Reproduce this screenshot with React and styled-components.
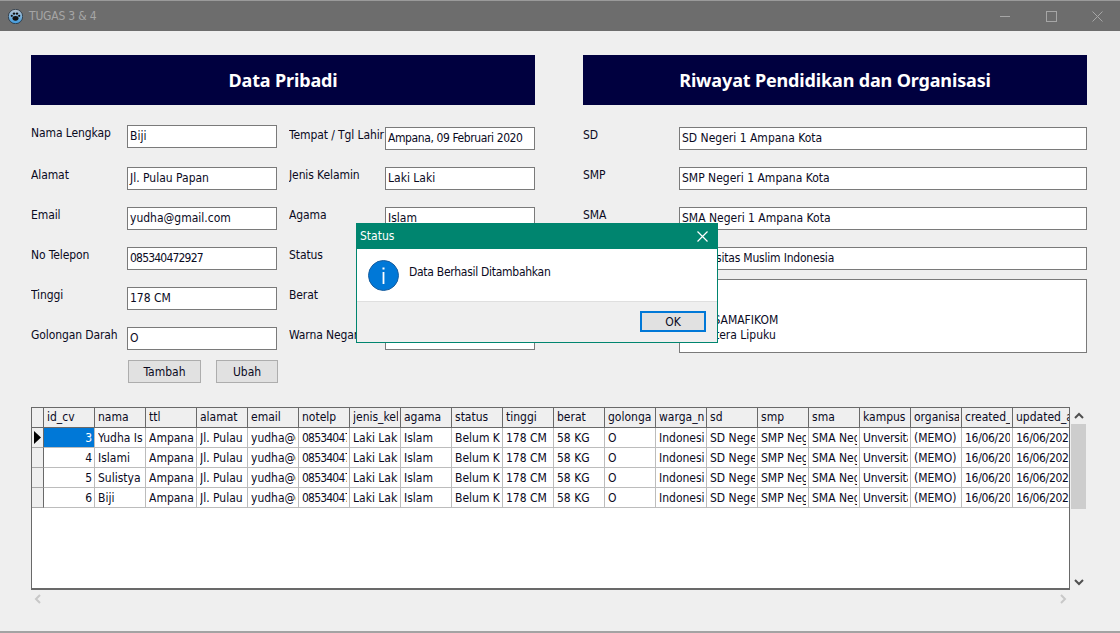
import React from "react";
import styled, { createGlobalStyle } from "styled-components";

const Global = createGlobalStyle`
  html, body { margin: 0; padding: 0; background: #efefef; }
  body { font-family: "DejaVu Sans Condensed", "Noto Sans", sans-serif; font-size: 12px; color: #0a0a1e; }
  * { box-sizing: border-box; }
`;

const Window = styled.div`
  position: relative; width: 1120px; height: 633px; overflow: hidden;
  display: flex; flex-direction: column; background: #efefef;
  border-bottom: 2px solid #a3a3a3;
`;
const TitleBar = styled.div`
  height: 31px; flex: none; background: #6d6d6d; border-top: 1px solid #9a9a9a;
  display: flex; align-items: center; padding-left: 8px; color: #a6a6a6; font-size: 12px;
`;
const TitleText = styled.span` margin-left: 6px; flex: 1; letter-spacing: -0.2px; `;
const WinButton = styled.span`
  width: 46px; height: 30px; display: flex; align-items: center; justify-content: center; flex: none;
`;
const Main = styled.main` flex: 1; padding: 24px 33px 0 31px; display: flex; flex-direction: column; `;
const Panels = styled.div` display: grid; grid-template-columns: 504px 504px; column-gap: 48px; `;
const Panel = styled.section` display: flex; flex-direction: column; `;
const Banner = styled.h1`
  margin: 0; height: 50px; background: #00003f; color: #fff; font-size: 18px; font-weight: 700;
  font-family: "Noto Sans", sans-serif;
  display: flex; align-items: center; justify-content: center; letter-spacing: -0.15px;
`;
const TwoCols = styled.div` display: grid; grid-template-columns: 246px 246px; column-gap: 12px; `;
const FieldCol = styled.div` display: flex; flex-direction: column; padding-top: ${p => p.$top}px; `;
const Field = styled.div`
  display: flex; align-items: flex-start; height: ${p => p.$h || 40}px;
`;
const Label = styled.label`
  width: 96px; flex: none; line-height: 16px; white-space: nowrap; overflow: hidden; letter-spacing: -0.1px;
`;
const Input = styled.div`
  flex: 1; height: 23px; background: #fff; border: 1px solid #7a7a7a; padding: 0 2px;
  line-height: 20px; white-space: nowrap; overflow: hidden; letter-spacing: ${p => p.$ls || 0}px;
`;
const Memo = styled.div`
  flex: 1; height: 74px; background: #fff; border: 1px solid #7a7a7a; padding: 33px 2px 0;
  line-height: 15px; white-space: pre;  overflow: hidden;
`;
const ButtonRow = styled.div` display: flex; gap: 15px; padding-left: 97px; `;
const Push = styled.button`
  width: ${p => p.$w}px; height: 23px; background: #e1e1e1; border: 1px solid #adadad; padding: 0;
  font: inherit; color: inherit;
`;

const GridArea = styled.div` display: flex; gap: 1px; margin-top: 24px; height: 183px; `;
const Table = styled.div`
  width: 1039px; height: 183px; flex: none; background: #fff; border: 2px solid #696969; border-width: 1px 1px 2px 1px;
  display: grid; grid-template-columns: 12px repeat(19, 51px) 1fr; grid-auto-rows: 20px; align-content: start; overflow: hidden;
`;
const Corner = styled.div` background: #efefef; border-right: 1px solid #696969; border-bottom: 1px solid #696969; `;
const Head = styled.div`
  background: #efefef; border-right: 1px solid ${p => p.$last ? "transparent" : "#696969"}; border-bottom: 1px solid #696969;
  padding-left: 3px; line-height: 19px; white-space: nowrap;
`;
const RowHead = styled.div`
  background: #efefef; border-right: 1px solid #696969; border-bottom: 1px solid #a8a8a8;
  display: flex; align-items: center; padding-left: 2px;
`;
const Cell = styled.div`
  border-right: 1px solid ${p => p.$last ? "transparent" : "#bcbcbc"}; border-bottom: 1px solid #bcbcbc;
  padding-left: 3px; line-height: 20px; white-space: nowrap; letter-spacing: ${p => p.$ls || 0}px;
  background: ${p => p.$sel ? "#0078d7" : "#fff"}; color: ${p => p.$sel ? "#fff" : "inherit"};
  text-align: ${p => p.$num ? "right" : "left"}; padding-right: ${p => p.$num ? 2 : 0}px;
`;
const Clip = styled.span` display: block; overflow: hidden; margin-right: 2px; `;
const VScroll = styled.div` width: 15px; display: flex; flex-direction: column; align-items: center; `;
const Arrow = styled.div` height: 17px; flex: none; display: flex; align-items: center; justify-content: center; `;
const Thumb = styled.div` width: 15px; height: 85px; background: #cdcdcd; flex: none; `;
const Spacer = styled.div` flex: 1; `;
const HScroll = styled.div`
  width: 1039px; height: 17px; display: flex; justify-content: space-between; padding: 0 3px;
`;

const Dialog = styled.div`
  position: absolute; left: 356px; top: 223px; width: 362px; height: 120px;
  border: 1px solid #00856f; background: #efefef; display: flex; flex-direction: column;
`;
const DlgTitle = styled.div`
  height: 25px; flex: none; background: #00856f; color: #fff; display: flex; align-items: center;
  justify-content: space-between; padding: 0 9px 1px 3px;
`;
const DlgBody = styled.div`
  height: 53px; flex: none; background: #fff; border-bottom: 1px solid #dfdfdf; display: flex; padding: 11px 0 0 11px; gap: 10px;
`;
const DlgText = styled.div` line-height: 16px; margin-top: 4px; letter-spacing: -0.28px; `;
const DlgFoot = styled.div` flex: 1; display: flex; justify-content: flex-end; padding: 9px 11px 0 0; `;
const OkButton = styled.button`
  width: 66px; height: 21px; background: #e1e1e1; border: 2px solid #0078d7; padding: 0; font: inherit; color: inherit;
`;

const Chevron = ({ dir, color }) => {
  const d = { up: "M1 6 L5 2 L9 6", down: "M1 2 L5 6 L9 2", left: "M6 1 L2 5 L6 9", right: "M2 1 L6 5 L2 9" }[dir];
  const horiz = dir === "left" || dir === "right";
  return (
    <svg width={horiz ? 8 : 10} height={horiz ? 10 : 8} viewBox={horiz ? "0 0 8 10" : "0 0 10 8"}>
      <path d={d} fill="none" stroke={color} strokeWidth="2" />
    </svg>
  );
};

const Paw = () => (
  <svg width="15" height="15" viewBox="0 0 15 15">
    <defs>
      <linearGradient id="g" x1="0" y1="0" x2="0" y2="1">
        <stop offset="0" stopColor="#b9c4cf" />
        <stop offset="1" stopColor="#3d9be0" />
      </linearGradient>
    </defs>
    <circle cx="7.5" cy="7.5" r="7.2" fill="url(#g)" stroke="#23303c" strokeWidth="0.8" />
    <ellipse cx="7.5" cy="9.3" rx="3" ry="2.4" fill="#111" />
    <circle cx="3.8" cy="6.8" r="1.1" fill="#111" />
    <circle cx="6" cy="4.6" r="1.2" fill="#111" />
    <circle cx="9" cy="4.6" r="1.2" fill="#111" />
    <circle cx="11.2" cy="6.8" r="1.1" fill="#111" />
  </svg>
);

const InfoIcon = () => (
  <svg width="31" height="31" viewBox="0 0 31 31">
    <circle cx="15.5" cy="15.5" r="15" fill="#0078d7" stroke="#1a5e9e" strokeWidth="1" />
    <rect x="14.6" y="12" width="1.8" height="12" fill="#fff" />
    <rect x="14.5" y="7.5" width="2" height="2" fill="#fff" />
  </svg>
);

const columns = ["id_cv","nama","ttl","alamat","email","notelp","jenis_kel","agama","status","tinggi","berat","golonga","warga_n","sd","smp","sma","kampus","organisa","created_at","updated_at"];
const common = ["Ampana, 09 Februari 2020","Jl. Pulau Papan","yudha@gmail.com","085340472927","Laki Laki","Islam","Belum Kawin","178 CM","58 KG","O","Indonesia","SD Negeri 1 Ampana Kota","SMP Negeri 1 Ampana Kota","SMA Negeri 1 Ampana Kota","Unversitas Muslim Indonesia","(MEMO)","16/06/2020","16/06/2020"];
const cellSpacing = { 4: -0.8, 15: -0.2, 17: -0.3, 18: -0.3 };
const rows = [[3,"Yudha Isnaeni"],[4,"Islami"],[5,"Sulistya"],[6,"Biji"]];

const col1 = [["Nama Lengkap","Biji",42],["Alamat","Jl. Pulau Papan"],["Email","yudha@gmail.com"],["No Telepon","085340472927",40,-0.8],["Tinggi","178 CM"],["Golongan Darah","O",33]];
const col2 = [["Tempat / Tgl Lahir","Ampana, 09 Februari 2020",40,-0.4],["Jenis Kelamin","Laki Laki"],["Agama","Islam"],["Status","Belum Kawin"],["Berat","58 KG"],["Warna Negara","Indonesia",33]];
const col3 = [["SD","SD Negeri 1 Ampana Kota"],["SMP","SMP Negeri 1 Ampana Kota"],["SMA","SMA Negeri 1 Ampana Kota"],["Kampus","Universitas Muslim Indonesia",32,-0.2]];

const renderField = ([l, v, h, ls]) => (
  <Field key={l} $h={h}><Label>{l}</Label><Input $ls={ls}>{v}</Input></Field>
);

export default function App() {
  return (
    <Window>
      <Global />
      <TitleBar>
        <Paw />
        <TitleText>TUGAS 3 &amp; 4</TitleText>
        <WinButton><svg width="10" height="10"><path d="M0 5.5H10" stroke="#a6a6a6" /></svg></WinButton>
        <WinButton><svg width="11" height="11"><rect x="0.5" y="0.5" width="10" height="10" fill="none" stroke="#a6a6a6" /></svg></WinButton>
        <WinButton><svg width="11" height="11"><path d="M0.5 0.5L10.5 10.5M10.5 0.5L0.5 10.5" stroke="#a6a6a6" /></svg></WinButton>
      </TitleBar>
      <Main>
        <Panels>
          <Panel>
            <Banner>Data Pribadi</Banner>
            <TwoCols>
              <FieldCol $top={20}>{col1.map(renderField)}</FieldCol>
              <FieldCol $top={22}>{col2.map(renderField)}</FieldCol>
            </TwoCols>
            <ButtonRow>
              <Push $w={73}>Tambah</Push>
              <Push $w={62}>Ubah</Push>
            </ButtonRow>
          </Panel>
          <Panel>
            <Banner>Riwayat Pendidikan dan Organisasi</Banner>
            <FieldCol $top={22}>
              {col3.map(renderField)}
              <Field $h={74}><Label>Organisasi</Label><Memo>{"HIMA SAMAFIKOM\nKM Putera Lipuku"}</Memo></Field>
            </FieldCol>
          </Panel>
        </Panels>
        <GridArea>
          <Table>
            <Corner />
            {columns.map((c, i) => <Head key={c} $last={i === 19}><Clip>{c}</Clip></Head>)}
            {rows.map(([id, name], r) => (
              <React.Fragment key={id}>
                <RowHead>
                  {r === 0 && <svg width="7" height="13" viewBox="0 0 7 13"><path d="M0 0L7 6.5L0 13Z" fill="#000" /></svg>}
                </RowHead>
                <Cell $num $sel={r === 0}>{id}</Cell>
                {[name, ...common].map((v, i) => <Cell key={i} $last={i === 18} $ls={cellSpacing[i]}><Clip>{v}</Clip></Cell>)}
              </React.Fragment>
            ))}
          </Table>
          <VScroll>
            <Arrow><Chevron dir="up" color="#505050" /></Arrow>
            <Thumb />
            <Spacer />
            <Arrow><Chevron dir="down" color="#505050" /></Arrow>
          </VScroll>
        </GridArea>
        <HScroll>
          <Arrow><Chevron dir="left" color="#c8c8c8" /></Arrow>
          <Arrow><Chevron dir="right" color="#c8c8c8" /></Arrow>
        </HScroll>
      </Main>
      <Dialog>
        <DlgTitle>
          <span>Status</span>
          <svg width="11" height="11"><path d="M0.5 0.5L10.5 10.5M10.5 0.5L0.5 10.5" stroke="#fff" strokeWidth="1.2" /></svg>
        </DlgTitle>
        <DlgBody>
          <InfoIcon />
          <DlgText>Data Berhasil Ditambahkan</DlgText>
        </DlgBody>
        <DlgFoot><OkButton>OK</OkButton></DlgFoot>
      </Dialog>
    </Window>
  );
}
